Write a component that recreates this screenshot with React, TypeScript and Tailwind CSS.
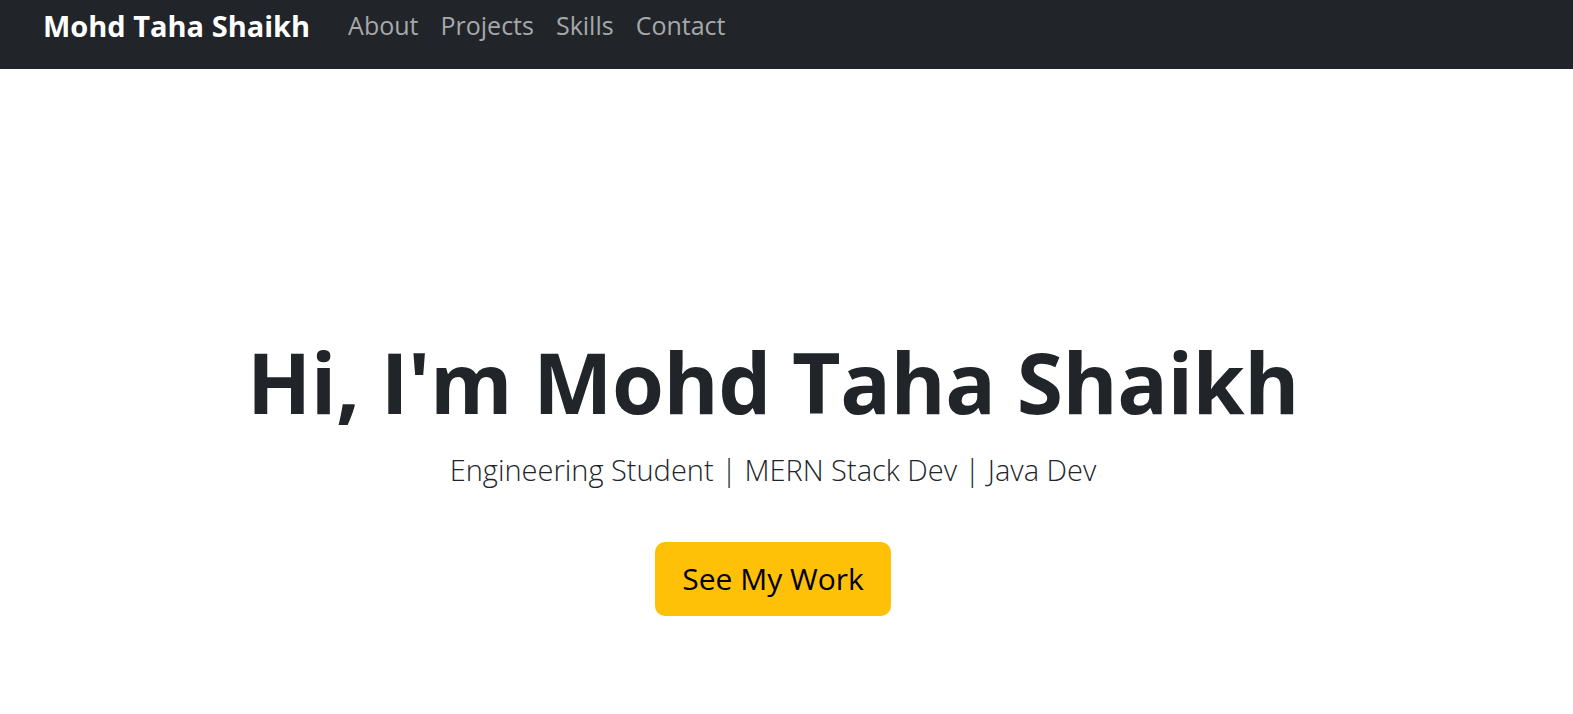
const links = ["About", "Projects", "Skills", "Contact"];

const App = () => {
  return (
    <div className="min-h-screen bg-white" style={{ fontFamily: '"Open Sans", "Noto Sans", sans-serif' }}>
      <nav className="h-[69px] bg-[#212529] px-[43px]">
        <div className="flex h-[52px] items-center">
          <a href="#" className="mr-[27px] text-[29px] leading-[1.5] font-bold text-white">
            Mohd Taha Shaikh
          </a>
          <ul className="flex items-center">
            {links.map((l) => (
              <li key={l}>
                <a href={`#${l.toLowerCase()}`} className="block px-[11px] text-[25px] leading-[1.5] text-[#a6a8aa]">
                  {l}
                </a>
              </li>
            ))}
          </ul>
        </div>
      </nav>

      <section className="flex flex-col items-center pt-[263px] pr-[27px] text-center">
        <h1 className="text-[84px] leading-[1.2] font-bold tracking-[-0.5px] text-[#212529]">
          Hi, I'm Mohd Taha Shaikh
        </h1>
        <p className="mt-[15px] text-[29px] leading-[1.5] font-light text-[#212529]">
          Engineering Student | MERN Stack Dev | Java Dev
        </p>
        <a
          href="#projects"
          className="mt-[51px] rounded-[10px] bg-[#ffc107] px-[27px] py-[15px] text-[30px] leading-[1.45] text-black"
        >
          See My Work
        </a>
      </section>
    </div>
  );
};

export default App;
